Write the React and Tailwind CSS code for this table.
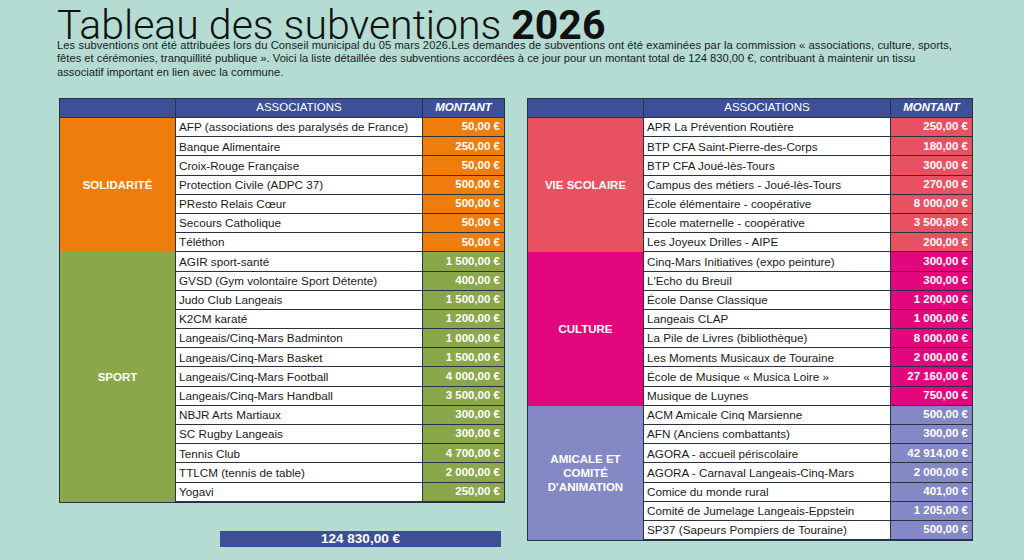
const LEFT = [
    {
        label: 'SOLIDARITÉ',
        cat: 'bg-[#ee7d0b]',
        rows: [
            ['AFP (associations des paralysés de France)', '50,00 €'],
            ['Banque Alimentaire', '250,00 €'],
            ['Croix-Rouge Française', '50,00 €'],
            ['Protection Civile (ADPC 37)', '500,00 €'],
            ['PResto Relais Cœur', '500,00 €'],
            ['Secours Catholique', '50,00 €'],
            ['Téléthon', '50,00 €'],
        ],
    },
    {
        label: 'SPORT',
        cat: 'bg-[#8aa84a]',
        rows: [
            ['AGIR sport-santé', '1 500,00 €'],
            ['GVSD (Gym volontaire Sport Détente)', '400,00 €'],
            ['Judo Club Langeais', '1 500,00 €'],
            ['K2CM karaté', '1 200,00 €'],
            ['Langeais/Cinq-Mars Badminton', '1 000,00 €'],
            ['Langeais/Cinq-Mars Basket', '1 500,00 €'],
            ['Langeais/Cinq-Mars Football', '4 000,00 €'],
            ['Langeais/Cinq-Mars Handball', '3 500,00 €'],
            ['NBJR Arts Martiaux', '300,00 €'],
            ['SC Rugby Langeais', '300,00 €'],
            ['Tennis Club', '4 700,00 €'],
            ['TTLCM (tennis de table)', '2 000,00 €'],
            ['Yogavi', '250,00 €'],
        ],
    },
];

const RIGHT = [
    {
        label: 'VIE SCOLAIRE',
        cat: 'bg-[#e8515f]',
        rows: [
            ['APR La Prévention Routière', '250,00 €'],
            ['BTP CFA Saint-Pierre-des-Corps', '180,00 €'],
            ['BTP CFA Joué-lès-Tours', '300,00 €'],
            ['Campus des métiers - Joué-lès-Tours', '270,00 €'],
            ['École élémentaire - coopérative', '8 000,00 €'],
            ['École maternelle - coopérative', '3 500,80 €'],
            ['Les Joyeux Drilles - AIPE', '200,00 €'],
        ],
    },
    {
        label: 'CULTURE',
        cat: 'bg-[#e2077d]',
        rows: [
            ['Cinq-Mars Initiatives (expo peinture)', '300,00 €'],
            ["L'Echo du Breuil", '300,00 €'],
            ['École Danse Classique', '1 200,00 €'],
            ['Langeais CLAP', '1 000,00 €'],
            ['La Pile de Livres (bibliothèque)', '8 000,00 €'],
            ['Les Moments Musicaux de Touraine', '2 000,00 €'],
            ['École de Musique « Musica Loire »', '27 160,00 €'],
            ['Musique de Luynes', '750,00 €'],
        ],
    },
    {
        label: (
            <>
                AMICALE ET
                <br />
                COMITÉ
                <br />
                D'ANIMATION
            </>
        ),
        cat: 'bg-[#8488c4]',
        rows: [
            ['ACM Amicale Cinq Marsienne', '500,00 €'],
            ['AFN (Anciens combattants)', '300,00 €'],
            ['AGORA - accueil périscolaire', '42 914,00 €'],
            ['AGORA - Carnaval Langeais-Cinq-Mars', '2 000,00 €'],
            ['Comice du monde rural', '401,00 €'],
            ['Comité de Jumelage Langeais-Eppstein', '1 205,00 €'],
            ['SP37 (Sapeurs Pompiers de Touraine)', '500,00 €'],
        ],
    },
];

function Section({ section }) {
    return (
        <div className="flex">
            <div className={`w-[115px] shrink-0 flex items-center justify-center text-center text-[11.5px] font-bold leading-[14px] text-white ${section.cat}`}>
                {section.label}
            </div>
            <div className="flex-1 flex flex-col">
                {section.rows.map(([name, amount]) => (
                    <div key={name} className="flex h-[19.2px] border-b border-[#2b3145]">
                        <div className="w-[248px] bg-white border-l border-r border-[#2b3145] pl-[3px] flex items-center text-[11.7px] text-[#1a1a1a] whitespace-nowrap">
                            {name}
                        </div>
                        <div className={`flex-1 pr-[4px] flex items-center justify-end text-[11.5px] font-bold text-white ${section.cat}`}>
                            {amount}
                        </div>
                    </div>
                ))}
            </div>
        </div>
    );
}

function Table({ sections }) {
    return (
        <div className="w-[446px] border border-[#2b3145]">
            <div className="flex h-[19px] bg-[#3d4f97] border-b border-[#2b3145] text-white text-[11.5px]">
                <div className="w-[115px]" />
                <div className="w-[248px] border-l border-r border-[#2b3145] flex items-center justify-center">ASSOCIATIONS</div>
                <div className="flex-1 flex items-center justify-center font-bold italic">MONTANT</div>
            </div>
            {sections.map((s, i) => (
                <Section key={i} section={s} />
            ))}
        </div>
    );
}

export default function App() {
    return (
        <div className="w-[1024px] h-[560px] bg-[#b5dcd3] overflow-hidden font-['Liberation_Sans',Arial,sans-serif] text-[#1a1a1a]">
            <div className="pl-[57px] pt-[11.5px]">
                <h1 className="font-['Roboto','Liberation_Sans',sans-serif] text-[41px] leading-[27px] font-light text-[#111] whitespace-nowrap">
                    Tableau des subventions <span className="font-bold">2026</span>
                </h1>
                <p className="text-[11.2px] leading-[13.5px] text-[#1a1a1a] whitespace-nowrap">
                    <span className="tracking-[0.08px]">Les subventions ont été attribuées lors du Conseil municipal du 05 mars 2026.Les demandes de subventions ont été examinées par la commission « associations, culture, sports,</span>
                    <br />
                    fêtes et cérémonies, tranquillité publique ». Voici la liste détaillée des subventions accordées à ce jour pour un montant total de 124 830,00 €, contribuant à maintenir un tissu
                    <br />
                    associatif important en lien avec la commune.
                </p>
            </div>
            <div className="flex items-start gap-[22px] pl-[59px] mt-[19px]">
                <div className="flex flex-col">
                    <Table sections={LEFT} />
                    <div className="mt-[28px] ml-[161px] w-[281px] h-[16px] bg-[#3d4f97] flex items-center justify-center text-white font-bold text-[13.5px]">
                        124 830,00 €
                    </div>
                </div>
                <Table sections={RIGHT} />
            </div>
        </div>
    );
}
